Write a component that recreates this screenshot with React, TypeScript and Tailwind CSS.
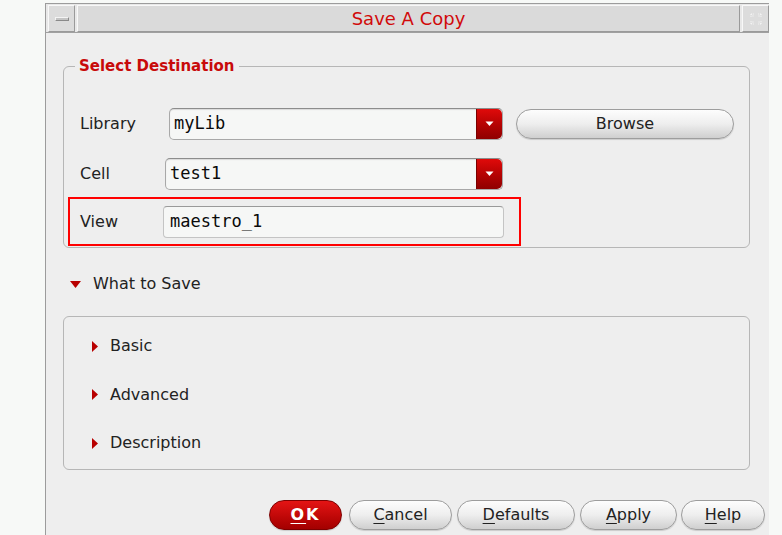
import React from "react";

const sans = { fontFamily: '"DejaVu Sans", "Liberation Sans", sans-serif' };
const mono = { fontFamily: '"DejaVu Sans Mono", "Liberation Mono", monospace' };

function RedArrow() {
  return (
    <div className="w-[26px] h-full rounded-r-[5px] bg-gradient-to-b from-[#e00a0a] to-[#8f0000] flex items-center justify-center border-l border-[#7a0000]">
      <svg width="9" height="6" viewBox="0 0 9 6">
        <path d="M0.5 0.5 H8.5 L4.5 5 Z" fill="#ffffff" />
      </svg>
    </div>
  );
}

function Combo({ value, width }: { value: string; width: string }) {
  return (
    <div className={`${width} h-[32px] flex rounded-[5px] border border-[#a8a8a8] border-t-[#8c8c8c] bg-[#f6f7f6] shadow-[inset_0_1px_1px_rgba(0,0,0,0.12)]`}>
      <div className="flex-1 flex items-center pl-[4px] text-[17px] text-[#0a0a0a]" style={mono}>
        {value}
      </div>
      <RedArrow />
    </div>
  );
}

function PillButton({ width, children, red }: { width: string; children: React.ReactNode; red?: boolean }) {
  return (
    <div
      className={`${width} h-[30px] rounded-full flex items-center justify-center text-[16px] ${
        red
          ? "bg-gradient-to-b from-[#e41414] to-[#a30000] border border-[#7d0000] text-white font-bold tracking-[2px]"
          : "bg-gradient-to-b from-[#fdfdfd] via-[#eeeeee] to-[#cfcfcf] border border-[#9d9d9d] text-[#222]"
      } shadow-[0_1px_1px_rgba(0,0,0,0.15)]`}
      style={sans}
    >
      {children}
    </div>
  );
}

function RightTri() {
  return (
    <svg width="6" height="11" viewBox="0 0 6 11" className="shrink-0">
      <path d="M0 0 L6 5.5 L0 11 Z" fill="#b80000" />
    </svg>
  );
}

export default function App() {
  return (
    <div className="w-[782px] h-[535px] bg-[#f7f9f7] pl-[45px] pt-[3px] overflow-hidden" style={sans}>
      <div className="w-[724px] h-[532px] border-l border-t border-[#9c9c9c] bg-[#eeeeee] flex flex-col">
        {/* title bar */}
        <div className="h-[29px] flex bg-[#e8e8e8] border-b border-[#a0a0a0] pl-[2px] pt-[1px] gap-[2px]">
          <div className="w-[27px] h-[27px] bg-[#dcdcdc] border border-t-[#f8f8f8] border-l-[#f8f8f8] border-b-[#9a9a9a] border-r-[#9a9a9a] flex items-center justify-center">
            <div className="w-[14px] h-[4px] bg-[#c4c4c4] border border-t-[#f4f4f4] border-l-[#f4f4f4] border-b-[#8a8a8a] border-r-[#8a8a8a]" />
          </div>
          <div className="flex-1 h-[27px] bg-[#dadada] border border-t-[#f8f8f8] border-l-[#f8f8f8] border-b-[#9a9a9a] border-r-[#9a9a9a] flex items-center justify-center text-[18px] text-[#d10a0a]">
            Save A Copy
          </div>
          <div className="w-[27px] h-[27px] bg-[#dcdcdc] border border-t-[#f8f8f8] border-l-[#f8f8f8] border-b-[#9a9a9a] border-r-[#9a9a9a] flex items-center justify-center">
            <svg width="16" height="16" viewBox="0 0 16 16">
              <path d="M3 3 L6 6 M13 3 L10 6 M3 13 L6 10 M13 13 L10 10 M3 3 V6 M3 3 H6 M13 3 V6 M13 3 H10 M3 13 V10 M3 13 H6 M13 13 V10 M13 13 H10" stroke="#f4f4f4" strokeWidth="1.2" strokeDasharray="1.2 1" fill="none" />
            </svg>
          </div>
        </div>

        {/* content */}
        <div className="flex-1 pl-[17px] pr-[19px] pt-[24px] flex flex-col">
          <fieldset className="border border-[#b6b6b6] rounded-[6px] min-w-0">
            <legend className="ml-[11px] px-[4px] text-[15px] leading-[18px] font-bold text-[#c80a0a]">
              Select Destination
            </legend>
            <div className="pt-[33px] pb-[1px] flex flex-col">
              <div className="flex items-center h-[32px] pl-[16px]">
                <div className="w-[89px] text-[16px] text-[#222]">Library</div>
                <Combo value="myLib" width="w-[334px]" />
                <div className="ml-[13px]">
                  <PillButton width="w-[218px]">Browse</PillButton>
                </div>
              </div>
              <div className="flex items-center h-[32px] pl-[16px] mt-[18px]">
                <div className="w-[85px] text-[16px] text-[#222]">Cell</div>
                <Combo value="test1" width="w-[338px]" />
              </div>
              <div className="ml-[4px] mt-[7px] w-[453px] h-[49px] border-2 border-[#ff0000] flex items-center pl-[10px]">
                <div className="w-[83px] text-[16px] text-[#222]">View</div>
                <div className="w-[341px] h-[32px] rounded-[4px] border border-[#c4c4c4] border-t-[#9a9a9a] bg-[#f6f7f6] flex items-center pl-[6px] text-[17px] text-[#0a0a0a]" style={mono}>
                  maestro_1
                </div>
              </div>
            </div>
          </fieldset>

          <div className="flex items-center h-[24px] mt-[24px] pl-[7px] gap-[12px]">
            <svg width="11" height="7" viewBox="0 0 11 7">
              <path d="M0 0 H11 L5.5 7 Z" fill="#b80000" />
            </svg>
            <span className="text-[16px] text-[#222]">What to Save</span>
          </div>

          <div className="mt-[20px] border border-[#b6b6b6] rounded-[6px] pt-[17px] pb-[14px] pl-[28px] flex flex-col gap-[24.5px]">
            <div className="flex items-center h-[24px] gap-[12px]">
              <RightTri />
              <span className="text-[16px] text-[#222]">Basic</span>
            </div>
            <div className="flex items-center h-[24px] gap-[12px]">
              <RightTri />
              <span className="text-[16px] text-[#222]">Advanced</span>
            </div>
            <div className="flex items-center h-[24px] gap-[12px]">
              <RightTri />
              <span className="text-[16px] text-[#222]">Description</span>
            </div>
          </div>

          <div className="mt-[30px] flex justify-end -mr-[15px]">
            <PillButton width="w-[73px]" red>
              <span><span className="underline underline-offset-[3px]">O</span>K</span>
            </PillButton>
            <div className="ml-[7px]">
              <PillButton width="w-[103px]"><span><span className="underline underline-offset-[3px]">C</span>ancel</span></PillButton>
            </div>
            <div className="ml-[5px]">
              <PillButton width="w-[118px]"><span><span className="underline underline-offset-[3px]">D</span>efaults</span></PillButton>
            </div>
            <div className="ml-[5px]">
              <PillButton width="w-[97px]"><span><span className="underline underline-offset-[3px]">A</span>pply</span></PillButton>
            </div>
            <div className="ml-[4px]">
              <PillButton width="w-[84px]"><span><span className="underline underline-offset-[3px]">H</span>elp</span></PillButton>
            </div>
          </div>
        </div>
      </div>
    </div>
  );
}
